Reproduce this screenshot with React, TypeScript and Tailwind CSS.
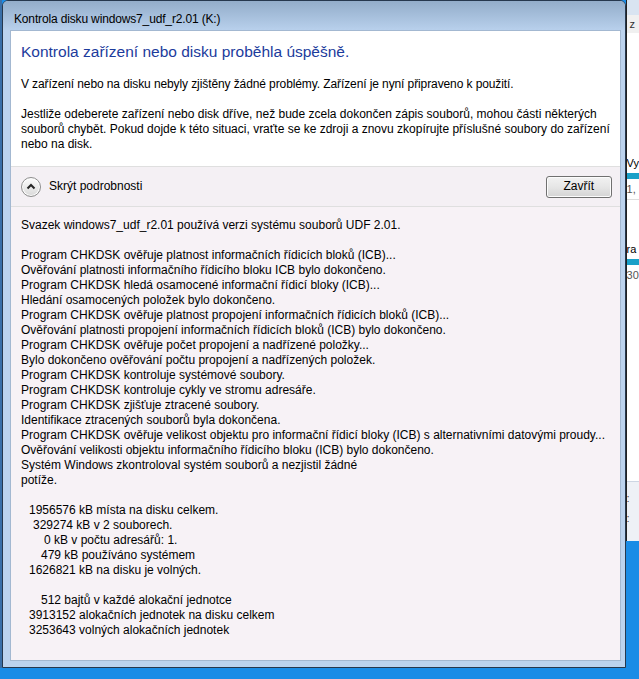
import type { ReactNode } from "react";

const details: { text: string; pad?: string }[] = [
  { text: "Svazek windows7_udf_r2.01 používá verzi systému souborů UDF 2.01." },
  { text: "" },
  { text: "Program CHKDSK ověřuje platnost informačních řídicích bloků (ICB)..." },
  { text: "Ověřování platnosti informačního řídicího bloku ICB bylo dokončeno." },
  { text: "Program CHKDSK hledá osamocené informační řídicí bloky (ICB)..." },
  { text: "Hledání osamocených položek bylo dokončeno." },
  { text: "Program CHKDSK ověřuje platnost propojení informačních řídicích bloků (ICB)..." },
  { text: "Ověřování platnosti propojení informačních řídicích bloků (ICB) bylo dokončeno." },
  { text: "Program CHKDSK ověřuje počet propojení a nadřízené položky..." },
  { text: "Bylo dokončeno ověřování počtu propojení a nadřízených položek." },
  { text: "Program CHKDSK kontroluje systémové soubory." },
  { text: "Program CHKDSK kontroluje cykly ve stromu adresáře." },
  { text: "Program CHKDSK zjišťuje ztracené soubory." },
  { text: "Identifikace ztracených souborů byla dokončena." },
  {
    text: "Program CHKDSK ověřuje velikost objektu pro informační řídicí bloky (ICB) s alternativními datovými proudy...",
  },
  { text: "Ověřování velikosti objektu informačního řídicího bloku (ICB) bylo dokončeno." },
  { text: "Systém Windows zkontroloval systém souborů a nezjistil žádné" },
  { text: "potíže." },
  { text: "" },
  { text: "1956576 kB místa na disku celkem.", pad: "pl-[8px]" },
  { text: "329274 kB v 2 souborech.", pad: "pl-[12px]" },
  { text: "0 kB v počtu adresářů: 1.", pad: "pl-[23px]" },
  { text: "479 kB používáno systémem", pad: "pl-[20px]" },
  { text: "1626821 kB na disku je volných.", pad: "pl-[8px]" },
  { text: "" },
  { text: "512 bajtů v každé alokační jednotce", pad: "pl-[20px]" },
  { text: "3913152 alokačních jednotek na disku celkem", pad: "pl-[8px]" },
  { text: "3253643 volných alokačních jednotek", pad: "pl-[8px]" },
];

const Line = ({ children, className = "" }: { children: ReactNode; className?: string }) => (
  <div className={`h-[15px] whitespace-nowrap ${className}`}>{children}</div>
);

const ChevronButton = () => (
  <div className="w-[20px] h-[20px] rounded-full border border-[#8e8e8e] bg-gradient-to-b from-[#fdfdfd] to-[#d9d9d9] flex items-center justify-center shadow-[inset_0_0_0_1px_#ffffff]">
    <svg width="10" height="7" viewBox="0 0 10 7">
      <path d="M1.5 5.5 L5 2 L8.5 5.5" fill="none" stroke="#262626" strokeWidth="2" />
    </svg>
  </div>
);

export default function App() {
  return (
    <div
      className="w-[639px] h-[679px] overflow-hidden bg-[#1a8ce6] flex text-black text-[12px] leading-[15px]"
      style={{ fontFamily: '"Liberation Sans", Arial, sans-serif' }}
    >
      {/* left edge of screen */}
      <div className="w-[2px] h-[668px] bg-[#3a6fa8]" />

      {/* dialog window */}
      <div className="w-[628px] h-[668px] flex flex-col border border-[#26384e] rounded-tl-[6px] rounded-tr-[6px] bg-[#bcd3ee] overflow-hidden">
        <div className="h-[29px] shrink-0 bg-gradient-to-b from-[#93adca] to-[#b8d0ec] flex items-center pl-[11px] pt-[7px]">
          <span className="text-[12px] tracking-[-0.15px] text-black">Kontrola disku windows7_udf_r2.01 (K:)</span>
        </div>

        <div className="flex-1 flex px-[7px] pb-[6px]">
          <div className="flex-1 flex flex-col border border-[#a3b8d1] bg-white">
            {/* main header */}
            <div className="h-[135px] shrink-0 bg-white px-[10px] pt-[10px]">
              <div className="text-[15.5px] leading-[21px] text-[#1c3b9c] whitespace-nowrap">
                Kontrola zařízení nebo disku proběhla úspěšně.
              </div>
              <div className="mt-[15px] tracking-[-0.1px]">
                <Line>
                  V zařízení nebo na disku nebyly zjištěny žádné problémy. Zařízení je nyní připraveno k použití.
                </Line>
              </div>
              <div className="mt-[15px]">
                <Line>
                  Jestliže odeberete zařízení nebo disk dříve, než bude zcela dokončen zápis souborů, mohou části některých
                </Line>
                <Line>
                  souborů chybět. Pokud dojde k této situaci, vraťte se ke zdroji a znovu zkopírujte příslušné soubory do zařízení
                </Line>
                <Line>nebo na disk.</Line>
              </div>
            </div>

            {/* footer with toggle and close */}
            <div className="h-[41px] shrink-0 border-t border-[#dfdfdf] border-b border-b-[#dfdfdf] bg-[#f4f0f4] flex items-center pl-[10px] pr-[8px]">
              <ChevronButton />
              <span className="ml-[8px]">Skrýt podrobnosti</span>
              <div className="ml-auto w-[66px] h-[22px] rounded-[3px] border border-[#707070] bg-gradient-to-b from-[#f2f2f2] via-[#e6e6e6] to-[#d4d4d4] shadow-[inset_0_0_0_1px_#fcfcfc] flex items-center justify-center">
                Zavřít
              </div>
            </div>

            {/* details */}
            <div className="flex-1 bg-[#f7f2f6] px-[10px] pt-[11px]">
              {details.map((d, i) => (
                <Line key={i} className={d.pad ?? ""}>
                  {d.text}
                </Line>
              ))}
            </div>
          </div>
        </div>
      </div>

      {/* window behind, on the right */}
      <div className="flex-1 h-[541px] bg-white border-l border-[#222] flex flex-col">
        <div className="h-[15px] bg-[#d9e4f1]" />
        <div className="h-[18px] bg-[#f0f0f0] text-[11px] leading-[18px] pl-[3px] text-[#333] overflow-hidden">z</div>
        <div className="h-[120px] bg-white" />
        <div className="h-[20px] text-[11px] leading-[20px] overflow-hidden">Vy</div>
        <div className="h-[6px] bg-[#1aa0c8]" />
        <div className="h-[20px] text-[11px] leading-[20px] overflow-hidden text-[#555]">1,</div>
        <div className="h-[40px] bg-white border-t border-[#ddd]" />
        <div className="h-[20px] text-[11px] leading-[20px] overflow-hidden">ra</div>
        <div className="h-[6px] bg-[#1aa0c8]" />
        <div className="h-[20px] text-[11px] leading-[20px] overflow-hidden text-[#555]">30</div>
        <div className="flex-1 bg-white" />
        <div className="h-[60px] bg-[#eef1f6] border-t border-[#cdd6e3] text-[11px] text-[#444] leading-[20px] pt-[6px]">
          <div>:</div>
          <div>:</div>
        </div>
      </div>
    </div>
  );
}
